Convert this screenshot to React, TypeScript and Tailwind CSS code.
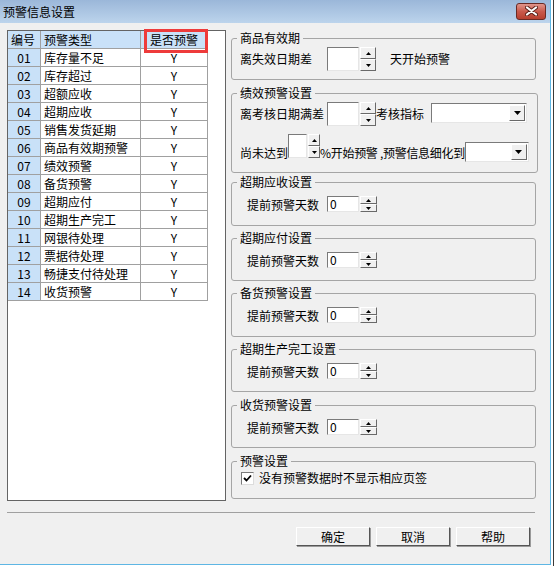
import React from "react";

const rows = [
  ["01", "库存量不足"],
  ["02", "库存超过"],
  ["03", "超额应收"],
  ["04", "超期应收"],
  ["05", "销售发货延期"],
  ["06", "商品有效期预警"],
  ["07", "绩效预警"],
  ["08", "备货预警"],
  ["09", "超期应付"],
  ["10", "超期生产完工"],
  ["11", "网银待处理"],
  ["12", "票据待处理"],
  ["13", "畅捷支付待处理"],
  ["14", "收货预警"],
];

const raised =
  "bg-[#f0f0f0] border border-t-white border-l-white border-r-[#696969] border-b-[#696969]";
const sunken =
  "bg-white border border-t-[#7a7a7a] border-l-[#7a7a7a] border-r-[#e6e6e6] border-b-[#e6e6e6]";

const Tri = ({ up }: { up?: boolean }) => (
  <svg width="5" height="3" viewBox="0 0 5 3">
    <path d={up ? "M2.5 0L5 3H0z" : "M0 0h5L2.5 3z"} fill="#000" />
  </svg>
);

function SpinBox({ value = "", box, btn }: { value?: string; box: string; btn: string }) {
  return (
    <div className="flex gap-[1px] shrink-0">
      <div className={`${box} ${sunken} pl-[2px] text-[12px] leading-[13px]`}>{value}</div>
      <div className={`${btn} flex flex-col`}>
        <div className={`flex-1 flex items-center justify-center ${raised}`}>
          <Tri up />
        </div>
        <div className={`flex-1 flex items-center justify-center ${raised}`}>
          <Tri />
        </div>
      </div>
    </div>
  );
}

function Combo({ size }: { size: string }) {
  return (
    <div className={`${size} flex p-[1px] ${sunken}`}>
      <div className="flex-1" />
      <div className={`w-[16px] flex items-center justify-center ${raised}`}>
        <svg width="7" height="4" viewBox="0 0 7 4">
          <path d="M0 0h7L3.5 4z" fill="#000" />
        </svg>
      </div>
    </div>
  );
}

function Group({
  title,
  className,
  children,
}: {
  title: string;
  className: string;
  children: React.ReactNode;
}) {
  return (
    <fieldset className={`border border-[#a5a5a5] rounded-[3px] pl-[5px] ${className}`}>
      <legend className="px-[3px] text-[12px] leading-[14px]">{title}</legend>
      {children}
    </fieldset>
  );
}

function DaysGroup({ title, className }: { title: string; className: string }) {
  return (
    <Group title={title} className={className}>
      <div className="flex items-end mt-[7px] pl-[10px]">
        <span className="w-[80px] whitespace-nowrap text-[12px] leading-[14px]">提前预警天数</span>
        <SpinBox value="0" box="w-[32px] h-[16px]" btn="w-[17px] h-[16px]" />
      </div>
    </Group>
  );
}

export default function App() {
  return (
    <div className="w-[558px] h-[566px] bg-white flex font-['Noto_Sans_CJK_SC','Noto_Sans',sans-serif] text-black">
      <div className="w-[551px] h-[565px] flex flex-col bg-[#f0f0f0] border-r border-b border-[#5eb6e4]">
        {/* title bar */}
        <div className="h-[23px] flex items-center pl-[3px] pr-[4px] bg-gradient-to-b from-[#9bb7d9] to-[#bcd4ec]">
          <span className="text-[12px] leading-[14px]">预警信息设置</span>
          <div className="ml-auto mb-[1px] w-[30px] h-[17px] rounded-[3px] border border-[#6a2a24] bg-gradient-to-b from-[#e0958c] via-[#c9594b] to-[#b8402f] flex items-center justify-center">
            <svg width="13" height="10" viewBox="0 0 13 10">
              <path d="M2 1.5l9 7M11 1.5l-9 7" stroke="#5a2019" strokeWidth="4" strokeLinecap="round" />
              <path d="M2 1.5l9 7M11 1.5l-9 7" stroke="#fff" strokeWidth="2.2" strokeLinecap="round" />
            </svg>
          </div>
        </div>

        {/* body */}
        <div className="flex gap-[5px] pt-[7px] pl-[7px]">
          <div className="relative w-[219px] h-[471px] bg-white border border-[#646464]">
            <div className="grid grid-cols-[33px_100px_67px] w-[200px] text-[12px] leading-[17px]">
              <div className="h-[18px] pl-[3px] bg-[#c9e1f8] border-r border-b border-[#a0a0a0]">编号</div>
              <div className="h-[18px] pl-[3px] bg-[#c9e1f8] border-r border-b border-[#a0a0a0]">预警类型</div>
              <div className="h-[18px] text-center bg-[#c9e1f8] border-r border-b border-[#a0a0a0]">是否预警</div>
              {rows.map(([no, name]) => (
                <React.Fragment key={no}>
                  <div className="h-[18px] text-center bg-[#c9e1f8] border-r border-b border-[#a0a0a0]">{no}</div>
                  <div className="h-[18px] pl-[3px] border-r border-b border-[#a0a0a0]">{name}</div>
                  <div className="h-[18px] text-center border-r border-b border-[#a0a0a0]">Y</div>
                </React.Fragment>
              ))}
            </div>
            <div className="absolute left-[136px] top-[-2px] w-[64px] h-[24px] border-[3px] border-[#ee3b3b]" />
          </div>

          <div className="w-[305px] mt-[1px] flex flex-col">
            <Group title="商品有效期" className="h-[49px]">
              <div className="flex items-center mt-[2px] pl-[3px]">
                <span className="w-[87px] whitespace-nowrap text-[12px] leading-[14px]">离失效日期差</span>
                <SpinBox box="w-[32px] h-[24px]" btn="w-[16px] h-[24px]" />
                <span className="ml-[14px] whitespace-nowrap text-[12px] leading-[14px]">天开始预警</span>
              </div>
            </Group>

            <Group title="绩效预警设置" className="h-[87px] mt-[6px]">
              <div className="flex items-center mt-[2px] pl-[3px]">
                <span className="w-[87px] whitespace-nowrap text-[12px] leading-[14px]">离考核日期满差</span>
                <SpinBox box="w-[32px] h-[24px]" btn="w-[16px] h-[24px]" />
                <span className="w-[55px] whitespace-nowrap text-[12px] leading-[14px]">考核指标</span>
                <Combo size="w-[96px] h-[20px] self-start mt-[1px]" />
              </div>
              <div className="flex h-[28px] mt-[8px] pl-[3px]">
                <span className="shrink-0 self-end mb-[2px] whitespace-nowrap text-[12px] leading-[14px]">尚未达到</span>
                <SpinBox box="w-[19px] h-[24px]" btn="w-[12px] h-[24px]" />
                <span className="self-end mb-[2px] text-[12px] leading-[14px] tracking-[-0.3px] whitespace-nowrap">%开始预警 ,预警信息细化到</span>
                <Combo size="w-[64px] h-[20px] self-end ml-auto mr-[8px]" />
              </div>
            </Group>

            <DaysGroup title="超期应收设置" className="h-[51px] mt-[2px]" />
            <DaysGroup title="超期应付设置" className="h-[50px] mt-[5px]" />
            <DaysGroup title="备货预警设置" className="h-[51px] mt-[5px]" />
            <DaysGroup title="超期生产完工设置" className="h-[50px] mt-[5px]" />
            <DaysGroup title="收货预警设置" className="h-[50px] mt-[6px]" />

            <Group title="预警设置" className="h-[45px] mt-[6px]">
              <div className="flex items-center mt-[3px] pl-[4px]">
                <div className="w-[13px] h-[13px] flex items-center justify-center bg-white border border-t-[#7a7a7a] border-l-[#7a7a7a] border-r-[#dcdcdc] border-b-[#dcdcdc]">
                  <svg width="9" height="8" viewBox="0 0 9 8">
                    <path d="M1 4l2.5 2.5L8 1.5" stroke="#000" strokeWidth="1.8" fill="none" />
                  </svg>
                </div>
                <span className="ml-[5px] whitespace-nowrap text-[12px] leading-[14px]">没有预警数据时不显示相应页签</span>
              </div>
            </Group>
          </div>
        </div>

        {/* separator */}
        <div className="mt-[11px] ml-[7px] w-[528px] h-[1px] bg-[#a0a0a0]" />

        {/* buttons */}
        <div className="flex justify-end gap-[6px] mt-[14px] pr-[20px]">
          {["确定", "取消", "帮助"].map((t) => (
            <button
              key={t}
              className="w-[74px] h-[19px] text-[12px] leading-[14px] bg-[#f0f0f0] border border-t-white border-l-white border-r-[#555] border-b-[#555] shadow-[1px_1px_0_#9a9a9a]"
            >
              {t}
            </button>
          ))}
        </div>
      </div>
      <div className="w-[2px]" />
      <div className="w-[1px] h-full bg-[#3a3a3a]" />
    </div>
  );
}
